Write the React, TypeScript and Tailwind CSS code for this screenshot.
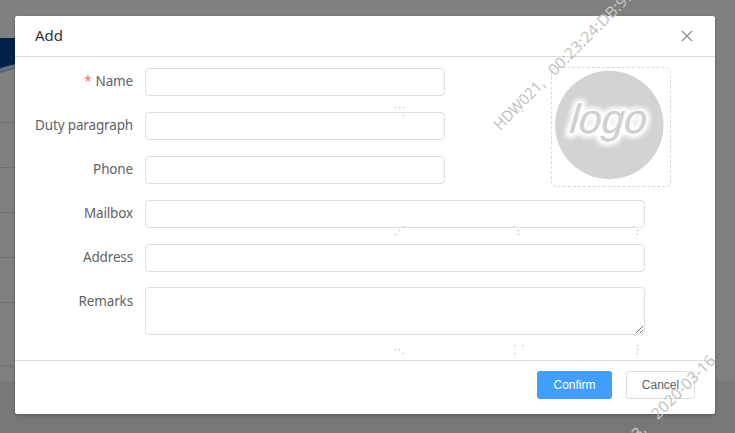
import type { ReactNode } from "react";

const dots: [number, number][] = [
  [395, 107], [399, 107], [403, 107], [403, 115],
  [518, 111], [522, 111], [637, 107], [637, 115],
  [403, 226], [399, 230], [395, 234],
  [514, 226], [518, 230], [518, 234],
  [633, 226], [637, 230], [637, 234],
  [395, 349], [399, 349], [403, 353],
  [514, 345], [522, 345], [514, 353],
  [637, 345], [637, 349], [637, 353],
];

function Field({ label, required, children }: { label: string; required?: boolean; children: ReactNode }) {
  return (
    <label className="flex items-start">
      <span className="mr-3 flex w-[98px] shrink-0 justify-end text-[13.5px] leading-[26px] tracking-[-0.15px] whitespace-nowrap text-[#606266]">
        {required && <span className="mr-1 text-[#f56c6c]">*</span>}
        {label}
      </span>
      {children}
    </label>
  );
}

const inputClass = "block h-7 rounded border border-[#dcdfe6] bg-white px-3 text-sm outline-none";

function Backdrop() {
  return (
    <svg className="absolute inset-0" width="735" height="433" aria-hidden="true">
      <path d="M0 38H15V65C10 66 5 68 0 69Z" fill="#032148" />
      <path d="M0 69.5C5 67.5 10 66.3 16 65" stroke="#5f6d84" strokeWidth="2" fill="none" />
      <path d="M0 72C5 70.3 10 69 16 67.5" stroke="#53627c" strokeWidth="2" fill="none" />
      {[122, 167, 212, 257, 302].map((y) => (
        <rect key={y} y={y} width="15" height="1" fill="#707070" />
      ))}
      <rect y="365" width="15" height="2" fill="#797979" />
      <rect y="367" width="15" height="2" fill="#7d7d7d" />
      <rect y="381" width="735" height="52" fill="#777777" />
    </svg>
  );
}

function Logo() {
  return (
    <svg width="118" height="118" viewBox="0 0 118 118" role="img" aria-label="logo">
      <defs>
        <filter id="halo" x="-20%" y="-30%" width="140%" height="160%">
          <feGaussianBlur stdDeviation="1.9" />
        </filter>
      </defs>
      <circle cx="57.3" cy="57" r="54.2" fill="#d3d3d3" />
      <g transform="translate(17 64.5) skewX(-5)" fontFamily="'Liberation Sans', Arial, sans-serif" fontStyle="italic" fontSize="41">
        <text y="1" textLength="77" lengthAdjust="spacingAndGlyphs" fill="white" stroke="white" strokeWidth="9" strokeLinejoin="round" filter="url(#halo)" aria-hidden="true">logo</text>
        <text textLength="77" lengthAdjust="spacingAndGlyphs" fill="#d0d0d0" stroke="#d0d0d0" strokeWidth="0.3">logo</text>
      </g>
    </svg>
  );
}

function Watermark() {
  return (
    <svg className="pointer-events-none absolute inset-0" width="735" height="433">
      <g fill="#c4c4c4" fontFamily="'Noto Sans', sans-serif" fontSize="15.5">
        <text transform="translate(500 131) rotate(-45)">
          <tspan textLength="65" lengthAdjust="spacingAndGlyphs">HDW021,</tspan>
          <tspan x="77" textLength="114" lengthAdjust="spacingAndGlyphs">00:23:24:DB:9E</tspan>
        </text>
        <text transform="translate(638 440) rotate(-45)">
          <tspan x="0">3,</tspan>
          <tspan x="28" textLength="83" lengthAdjust="spacingAndGlyphs">2020-03-16</tspan>
        </text>
      </g>
      {dots.map(([x, y]) => (
        <g key={`${x}-${y}`} fill="#ececec">
          <rect x={x - 1} y={y} width="3" height="1" />
          <rect x={x} y={y - 1} width="1" height="3" />
          <rect x={x} y={y} width="1" height="1" fill="#d4d4d4" />
        </g>
      ))}
    </svg>
  );
}

export default function App() {
  return (
    <main className="relative h-[433px] w-[735px] overflow-hidden bg-[#808080] px-[15px] pt-4 font-['Noto_Sans','Open_Sans',sans-serif]">
      <Backdrop />
      <section role="dialog" aria-labelledby="title" className="relative flex h-[398px] w-[700px] flex-col rounded-[2px] bg-white shadow-[0_1px_3px_rgba(0,0,0,0.3)]">
        <header className="flex h-[41px] items-center justify-between border-b border-[#dcdcdc] px-5">
          <h1 id="title" className="pb-0.5 text-[15px] leading-5 text-[#303133]">Add</h1>
          <button aria-label="Close" className="flex h-4 w-4 items-center justify-center">
            <svg width="12" height="12" viewBox="0 0 12 12" stroke="#858890" strokeWidth="1.1">
              <path d="M1 1L11 11M11 1L1 11" />
            </svg>
          </button>
        </header>
        <div className="flex grow flex-col gap-4 px-5 pt-[11px]">
          <div className="flex h-[116px] items-start">
            <div className="flex flex-col gap-4">
              <Field label="Name" required><input className={`${inputClass} w-[300px]`} /></Field>
              <Field label="Duty paragraph"><input className={`${inputClass} w-[300px]`} /></Field>
              <Field label="Phone"><input className={`${inputClass} w-[300px]`} /></Field>
            </div>
            <div className="-mt-px ml-[106px] h-[120px] w-[120px] rounded-md border border-dashed border-[#d9d9d9]">
              <Logo />
            </div>
          </div>
          <Field label="Mailbox"><input className={`${inputClass} w-[500px]`} /></Field>
          <Field label="Address"><input className={`${inputClass} w-[500px]`} /></Field>
          <Field label="Remarks">
            <textarea className="-mt-px block h-12 w-[500px] resize rounded border border-[#dcdfe6] bg-white px-3 py-1 text-sm outline-none" />
          </Field>
        </div>
        <footer className="flex h-[54px] items-start justify-end gap-[14px] border-t border-[#dcdcdc] px-5 pt-[10px] font-['Liberation_Sans',Arial,sans-serif] text-xs">
          <button className="h-7 w-[75px] rounded-[3px] bg-[#409eff] text-white">Confirm</button>
          <button className="h-7 w-[69px] rounded-[3px] border border-[#dcdfe6] bg-white text-[#606266]">Cancel</button>
        </footer>
      </section>
      <Watermark />
    </main>
  );
}
